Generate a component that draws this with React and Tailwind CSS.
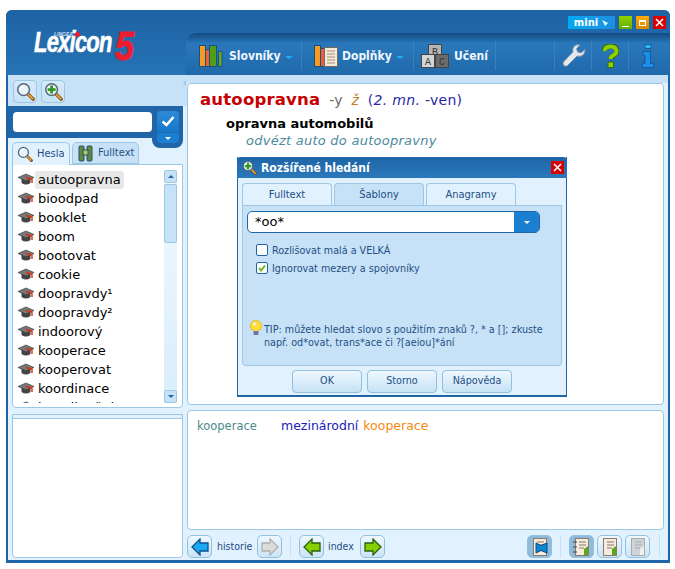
import React from 'react';

const WORDS = [
  'autoopravna', 'bioodpad', 'booklet', 'boom', 'bootovat', 'cookie',
  'doopravdy¹', 'doopravdy²', 'indoorový', 'kooperace', 'kooperovat', 'koordinace', 'koordinační',
];

const UI = "font-['DejaVu_Sans_Condensed','Liberation_Sans',sans-serif]";
const VERDANA = "font-['DejaVu_Sans',sans-serif]";

function Magnifier({ plus, size = 20 }) {
  return (
    <svg width={size} height={size} viewBox="0 0 20 20">
      <path d="M12 12l6 6" stroke="#7a4a10" strokeWidth="3.6" strokeLinecap="round" />
      <path d="M12.5 12.5l5 5" stroke="#f0a030" strokeWidth="2" strokeLinecap="round" />
      <circle cx="8" cy="8" r="6.2" fill="#e9f3fa" stroke="#56687a" strokeWidth="1.6" />
      <path d="M4.5 8a3.5 3.5 0 0 1 3.5-3.5" stroke="#fff" strokeWidth="1.5" fill="none" />
      {plus && <path d="M8 3.8v8.4M3.8 8h8.4" stroke="#2f9a1c" strokeWidth="3" />}
    </svg>
  );
}

function Binoculars() {
  return (
    <svg width="15" height="17" viewBox="0 0 15 17">
      <rect x="1" y="1" width="5" height="15" rx="1" fill="#5f8a3c" stroke="#24506e" />
      <rect x="9" y="1" width="5" height="15" rx="1" fill="#5f8a3c" stroke="#24506e" />
      <rect x="5" y="5" width="5" height="5" fill="#b8c86a" stroke="#24506e" />
    </svg>
  );
}

function Cap() {
  return (
    <svg width="16" height="13" viewBox="0 0 16 13">
      <path d="M3.5 5v5q4.500 3 9 0V5z" fill="#444" />
      <path d="M0 4.500L8 1l8 3.500L8 8z" fill="#777" stroke="#333" strokeWidth="0.6" />
      <path d="M8 4.500l6 1.500v4" stroke="#e03010" strokeWidth="1.400" fill="none" />
    </svg>
  );
}

function Books() {
  return (
    <svg width="24" height="22" viewBox="0 0 24 22">
      <rect x="0.500" y="0.500" width="6" height="21" fill="#f59a23" stroke="#1e4f7f" />
      <rect x="6.500" y="4.500" width="4" height="17" fill="#e8603c" stroke="#1e4f7f" />
      <rect x="10.500" y="0.500" width="7" height="21" fill="#4f9f18" stroke="#1e4f7f" />
      <rect x="19.500" y="6.500" width="3.500" height="15" fill="#5fae20" stroke="#1e4f7f" />
    </svg>
  );
}

function Docs() {
  return (
    <svg width="24" height="22" viewBox="0 0 24 22">
      <rect x="0.500" y="0.500" width="6" height="21" fill="#f59a23" stroke="#1e4f7f" />
      <rect x="6.500" y="3.500" width="4" height="18" fill="#e8603c" stroke="#1e4f7f" />
      <rect x="10.500" y="2.500" width="13" height="19" fill="#f5ead8" stroke="#7a6a5a" />
      <path d="M13 6h8M13 9h8M13 12h8M13 15h8M13 18h8" stroke="#a09080" strokeWidth="1" />
    </svg>
  );
}

function Blocks() {
  const box = (x, y, l, fill) => (
    <g>
      <rect x={x} y={y} width="13" height="13" fill={fill} stroke="#444" />
      <text x={x + 6.500} y={y + 10} fontSize="10" textAnchor="middle" fill="#333" fontFamily="'Liberation Mono',monospace">{l}</text>
    </g>
  );
  return (
    <svg width="29" height="24" viewBox="0 0 29 24">
      {box(7.500, 0.500, 'B', '#b5b5b5')}
      {box(0.500, 10.500, 'A', '#d5d5d5')}
      {box(14.500, 10.500, 'C', '#6c6c6c')}
    </svg>
  );
}

function Wrench() {
  return (
    <svg width="24" height="24" viewBox="0 0 24 24">
      <path d="M23 5.500l-4 3.500-3.500-1-1-3.500L18 1q-4-1-6 1.500-2 2.500-1 5.500L1.500 18q-1 2 .5 3.500t3.500 0L15 12q3.500 1 6-1 2-2 2-5.500z" fill="#e4e8ee" stroke="#8a9aac" strokeWidth="1" />
    </svg>
  );
}

function Question() {
  return (
    <svg width="17" height="24" viewBox="0 0 17 24">
      <path d="M2 7q.5-5 6.500-5t6.500 5q0 3-3.500 4.500-2.500 1-2.500 3.500" fill="none" stroke="#3a6a10" strokeWidth="5.500" />
      <path d="M2.500 7q.5-4.500 6-4.500t6 4.500q0 3-3.500 4.500-2.500 1-2.500 3.500" fill="none" stroke="#8ed000" strokeWidth="3.800" />
      <rect x="6" y="18" width="5.500" height="5.500" fill="#8ed000" stroke="#3a6a10" />
    </svg>
  );
}

function InfoIcon() {
  return (
    <svg width="12" height="24" viewBox="0 0 12 24">
      <rect x="3" y="0.500" width="6" height="4" fill="#2cb8f0" stroke="#1458a0" />
      <path d="M1 7.500h7.500v12H11.500v4H.5v-4H3v-8H1z" fill="#1a90e8" stroke="#1458a0" />
    </svg>
  );
}

function Arrow({ dir, color, edge }) {
  const pts = dir === 'left' ? '1,9 9,1 9,5 17,5 17,13 9,13 9,17' : '17,9 9,1 9,5 1,5 1,13 9,13 9,17';
  return (
    <svg width="18" height="18" viewBox="0 0 18 18">
      <polygon points={pts} fill={color} stroke={edge} strokeWidth="1.300" />
    </svg>
  );
}

function Notebook({ tabs, disabled, pin }) {
  const paper = disabled ? '#d0d4d6' : '#f6ebdc';
  const line = disabled ? '#a8acae' : '#8a7a6a';
  return (
    <svg width="18" height="20" viewBox="0 0 18 20">
      <rect x="2.500" y="1.500" width="13" height="17" fill={paper} stroke={line} />
      <path d="M6 5h7M6 8h7M6 11h5" stroke={line} strokeWidth="1" />
      {tabs && <path d="M0 5h4M0 10h4M0 15h4" stroke="#444" strokeWidth="1" />}
      {!pin && <path d="M11 18v-6l4-3v9z" fill={disabled ? '#f0f0f0' : '#58a818'} />}
      {pin && <path d="M5 6l5 2.500L16 6v10l-6-2.500L5 16z" fill="#0a88d8" stroke="#0a4a80" />}
    </svg>
  );
}

function ToolButton({ active, children, className = '' }) {
  return (
    <div className={`w-[25px] h-[23px] shrink-0 flex items-center justify-center rounded-[5px] border border-[#93c0de] ${active ? 'bg-[#8ebbdc]' : 'bg-gradient-to-b from-[#eef8ff] to-[#cbe4f6]'} ${className}`}>
      {children}
    </div>
  );
}

function NavItem({ icon, label, arrow, sep = true, gap = 'ml-[4px]', className = '' }) {
  return (
    <div className={`h-[29px] flex items-center ${sep ? 'border-r border-[#3b80bd]' : ''} ${className}`}>
      {icon}
      {label && <span className={`${gap} text-[12px] font-bold text-[#eef7ff] ${UI}`}>{label}</span>}
      {arrow && <span className="ml-[4px] mt-[3px] w-0 h-0 border-x-[4px] border-t-[3px] border-x-transparent border-t-[#22aef0]" />}
    </div>
  );
}

function Header() {
  return (
    <div className="h-[65px] flex shrink-0 rounded-t-[6px] bg-gradient-to-b from-[#1e63a3] to-[#2673b5]">
      {/* logo */}
      <div className="w-[180px] shrink-0 relative">
        <div className="pl-[28px] pt-[16px] flex items-start font-['Liberation_Sans',sans-serif] italic font-bold text-white">
          <span className="w-[81px] shrink-0 origin-left scale-x-[0.73] text-[30px] leading-[32px] tracking-[-1px] [-webkit-text-stroke:0.6px_white]">Lexicon</span>
          <span className="w-[20px] shrink-0 origin-left scale-x-[0.85] text-[40px] leading-[40px] text-[#ee1c2e] [-webkit-text-stroke:1px_#ee1c2e]">5</span>
        </div>
        <span className="absolute left-[48px] top-[21px] text-[5px] leading-[6px] italic font-bold text-[#cfe0f0] font-['Liberation_Sans',sans-serif]">LINGEA</span>
        <span className="absolute left-[69px] top-[22px] w-[5px] h-[5px] rounded-full bg-[#ee1c2e]" />
      </div>
      <div className="flex-1 flex flex-col">
        {/* window controls */}
        <div className="h-[23px] pt-[6px] pr-[4px] flex justify-end gap-[4px]">
          <div className="w-[47px] h-[13px] bg-gradient-to-r from-[#00a8f4] to-[#1c8fe0] flex items-center justify-center gap-[3px] text-white text-[10px] font-bold leading-none font-['DejaVu_Sans',sans-serif]">
            mini
            <svg width="8" height="8" viewBox="0 0 8 8"><path d="M1 1l6 3-3 3z" fill="#dff" /></svg>
          </div>
          <div className="w-[13px] h-[13px] bg-gradient-to-b from-[#8fd400] to-[#66ad00] flex items-end justify-center pb-[2px]"><span className="w-[7px] h-[1px] bg-white" /></div>
          <div className="w-[13px] h-[13px] bg-gradient-to-b from-[#ffa800] to-[#d98a00] flex items-center justify-center"><span className="w-[7px] h-[6px] border border-white border-t-2" /></div>
          <div className="w-[13px] h-[13px] bg-[#d80000] flex items-center justify-center">
            <svg width="9" height="9" viewBox="0 0 9 9"><path d="M1 1l7 7M8 1L1 8" stroke="#fff" strokeWidth="1.600" /></svg>
          </div>
        </div>
        {/* tab bar */}
        <div className="flex-1 rounded-tl-[10px] bg-gradient-to-b from-[#124a82] via-[#2a78bb] via-[25%] to-[#1f69aa] pt-[8px] flex items-start">
          <NavItem className="w-[116px] pl-[13px]" icon={<Books />} label="Slovníky" gap="ml-[6px]" arrow />
          <NavItem className="w-[112px] pl-[12px]" icon={<Docs />} label="Doplňky" arrow />
          <NavItem className="w-[82px] pl-[7px]" icon={<Blocks />} label="Učení" />
          <NavItem className="w-[59px]" />
          <NavItem className="w-[37px] pl-[7px]" icon={<Wrench />} />
          <NavItem className="w-[37px] pl-[10px]" icon={<Question />} />
          <NavItem className="pl-[13px]" sep={false} icon={<InfoIcon />} />
        </div>
      </div>
    </div>
  );
}

function Scrollbar() {
  return (
    <div className="w-[13px] h-[233px] shrink-0 flex flex-col bg-gradient-to-b from-[#f2f9ff] to-[#d9edfb]">
      <div className="h-[13px] bg-[#c7e2f6] border border-[#9cc8e6] rounded-[2px] flex items-center justify-center">
        <span className="w-0 h-0 border-x-[3px] border-b-[3px] border-x-transparent border-b-[#1f65a7]" />
      </div>
      <div className="h-[59px] mt-[1px] bg-[#c7e2f6] border border-[#9cc8e6] rounded-[2px]" />
      <div className="flex-1" />
      <div className="h-[13px] bg-[#c7e2f6] border border-[#9cc8e6] rounded-[2px] flex items-center justify-center">
        <span className="w-0 h-0 border-x-[3px] border-t-[3px] border-x-transparent border-t-[#1f65a7]" />
      </div>
    </div>
  );
}

function LeftColumn() {
  return (
    <div className="w-[179px] shrink-0 flex flex-col relative">
      <div className="h-[31px] bg-[#c7e2f6] pl-[5px] pt-[5px] pr-[4px] flex gap-[4px]">
        <div className="w-[24px] h-[23px] rounded-[4px] border border-[#9cc8e6] bg-gradient-to-b from-[#d6ebfa] to-[#c7e2f6] flex items-center justify-center"><Magnifier size={19} /></div>
        <div className="w-[24px] h-[23px] rounded-[4px] border border-[#9cc8e6] bg-gradient-to-b from-[#d6ebfa] to-[#c7e2f6] flex items-center justify-center"><Magnifier plus size={19} /></div>
      </div>
      <div className="h-[32px] mr-[4px] bg-[#1f65a7] pl-[5px] pt-[6px]">
        <div className="w-[139px] h-[20px] rounded-[4px] bg-white" />
      </div>
      {/* search button hangs below the band */}
      <div className="absolute left-[144px] top-[31px] w-[31px] h-[42px] bg-[#1f65a7] rounded-b-[8px] pt-[5px] pl-[5px]">
        <div className="w-[22px] h-[21px] rounded-t-[4px] bg-gradient-to-b from-[#2d8ad6] to-[#1677c8] flex items-center justify-center">
          <svg width="14" height="11" viewBox="0 0 14 11"><path d="M1.500 5.500l4 3.500 7-8" stroke="#fff" strokeWidth="2.600" fill="none" /></svg>
        </div>
        <div className="w-[22px] h-[10px] mt-[1px] rounded-b-[4px] bg-[#1a7fd0] flex items-center justify-center">
          <span className="w-0 h-0 border-x-[3px] border-t-[3px] border-x-transparent border-t-white" />
        </div>
      </div>

      <div className="flex-1 bg-[#e1f1fd] pl-[4px] pr-[4px] pt-[4px] flex flex-col">
        {/* tabs */}
        <div className={`flex gap-[2px] h-[23px] text-[11px] text-[#1f4f86] relative z-10 ${UI}`}>
          <div className="w-[58px] h-[23px] bg-[#e1f1fd] border border-b-0 border-[#9cc8e6] rounded-t-[5px] flex items-center pl-[4px] gap-[4px]"><Magnifier size={16} />Hesla</div>
          <div className="w-[67px] h-[22px] bg-[#c7e2f6] border border-[#9cc8e6] rounded-t-[5px] flex items-center pl-[5px] gap-[5px]"><Binoculars />Fulltext</div>
        </div>
        {/* word list */}
        <div className="h-[244px] shrink-0 -mt-[1px] bg-white border border-[#9cc8e6] rounded-b-[4px] flex pl-[5px] pr-[5px] pt-[5px] overflow-hidden">
          <div className={`flex-1 h-[233px] overflow-hidden text-[13px] text-black ${VERDANA}`}>
            {WORDS.map((w, i) => (
              <div key={w} className="h-[19px] flex items-center">
                <Cap />
                <span className={`ml-[1px] pl-[3px] pr-[3px] h-[18px] flex items-center rounded-[3px] ${i === 0 ? 'bg-[#e8e8e8]' : ''}`}>{w}</span>
              </div>
            ))}
          </div>
          <Scrollbar />
        </div>
        <div className="h-[144px] shrink-0 mt-[6px] bg-white border border-[#9cc8e6] rounded-b-[4px]">
          <div className="h-[4px] bg-[#e1f1fd] border-b border-[#9cc8e6]" />
        </div>
      </div>
    </div>
  );
}

function Dialog() {
  const tab = 'h-[22px] w-[90px] pt-[1px] text-[11px] border border-b-0 border-[#9cc8e6] rounded-t-[4px] flex items-center justify-center';
  const btn = 'w-[70px] h-[23px] rounded-[4px] border border-[#93c0de] bg-gradient-to-b from-[#eef8ff] to-[#c7e2f6] flex items-center justify-center';
  return (
    <div className={`absolute left-[50px] top-[82px] w-[330px] h-[240px] border border-t-0 border-b-2 border-[#1f65a7] bg-[#e1f1fd] text-[10.700px] text-[#1f4f86] flex flex-col ${UI}`}>
      <div className="h-[21px] -mx-[1px] rounded-t-[4px] bg-gradient-to-b from-[#1f65a7] to-[#2a78bb] flex items-center pl-[5px] pr-[3px] text-white font-bold text-[12px]">
        <Magnifier plus size={15} />
        <span className="ml-[4px] flex-1">Rozšířené hledání</span>
        <div className="w-[13px] h-[13px] bg-[#d80000] flex items-center justify-center">
          <svg width="9" height="9" viewBox="0 0 9 9"><path d="M1 1l7 7M8 1L1 8" stroke="#fff" strokeWidth="1.600" /></svg>
        </div>
      </div>
      <div className="flex gap-[2px] pl-[4px] pt-[5px] h-[27px] shrink-0">
        <div className={`${tab} bg-[#e1f1fd]`}>Fulltext</div>
        <div className={`${tab} bg-[#c7e2f6]`}>Šablony</div>
        <div className={`${tab} bg-[#e1f1fd]`}>Anagramy</div>
      </div>
      <div className="mx-[4px] h-[161px] shrink-0 bg-[#c7e2f6] border border-[#9cc8e6] rounded-b-[4px] pl-[4px] pt-[5px] flex flex-col">
        <div className="w-[293px] h-[22px] shrink-0 bg-white border border-[#1f65a7] rounded-[5px] flex items-center overflow-hidden">
          <span className={`flex-1 pl-[7px] text-[13px] text-black ${VERDANA}`}>*oo*</span>
          <div className="w-[25px] h-full bg-[#1a7fd0] flex items-center justify-center">
            <span className="w-0 h-0 border-x-[3px] border-t-[3px] border-x-transparent border-t-white" />
          </div>
        </div>
        <label className="mt-[10px] ml-[9px] h-[14px] flex items-center gap-[4px]">
          <span className="w-[12px] h-[12px] bg-white border border-[#1f65a7] rounded-[2px]" />
          <span className="pt-[2px]">Rozlišovat malá a VELKÁ</span>
        </label>
        <label className="mt-[4px] ml-[9px] h-[14px] flex items-center gap-[4px]">
          <span className="w-[12px] h-[12px] bg-white border border-[#1f65a7] rounded-[2px] flex items-center justify-center">
            <svg width="8" height="8" viewBox="0 0 8 8"><path d="M1 4l2 2.500L7 1.500" stroke="#6ab010" strokeWidth="1.800" fill="none" /></svg>
          </span>
          <span className="pt-[2px]">Ignorovat mezery a spojovníky</span>
        </label>
        <div className="mt-[48px] ml-[3px] flex items-start gap-[2px] leading-[13px]">
          <svg className="mt-[-3px] shrink-0" width="12" height="16" viewBox="0 0 12 16">
            <circle cx="6" cy="6" r="5.500" fill="#ffdc3c" stroke="#e8b820" />
            <circle cx="4.500" cy="4" r="1.800" fill="#fff7c0" />
            <rect x="3.500" y="11" width="5" height="4" rx="1" fill="#7078a8" />
          </svg>
          <span className="w-[285px]">TIP: můžete hledat slovo s použitím znaků ?, * a []; zkuste např. od*ovat, trans*ace či ?[aeiou]*ání</span>
        </div>
      </div>
      <div className="mt-[4px] flex justify-center gap-[5px]">
        <div className={btn}>OK</div>
        <div className={btn}>Storno</div>
        <div className={btn}>Nápověda</div>
      </div>
    </div>
  );
}

function RightColumn() {
  return (
    <div className="flex-1 flex flex-col relative">
      {/* splitter triangle */}
      <span className="absolute -left-[4px] top-[5px] w-0 h-0 border-y-[3px] border-r-[3px] border-y-transparent border-r-[#9cc8e6]" />
      <div className="h-[8px] shrink-0 bg-[#c7e2f6]" />
      <div className="flex-1 bg-[#e1f1fd] pr-[4px] flex flex-col">
        <div className={`h-[322px] shrink-0 bg-white border border-[#9cc8e6] rounded-[4px] pl-[12px] pt-[4px] ${VERDANA}`}>
          <div className="flex items-baseline text-[13px] h-[22px]">
            <span className="text-[16.500px] font-bold text-[#c60000] tracking-[0.2px]">autoopravna</span>
            <span className="ml-[9px] text-[14px] text-[#666]">-y</span>
            <span className="ml-[9px] text-[14px] italic text-[#c8781e]">ž</span>
            <span className="ml-[9px] text-[14px] tracking-[0.3px] text-[#2a2aa8]">(<i>2. mn.</i> -ven)</span>
          </div>
          <div className="mt-[6px] ml-[26px] text-[13px] leading-[16px] font-bold text-black">opravna automobilů</div>
          <div className="mt-[1px] ml-[46px] text-[13px] leading-[16px] italic tracking-[0.25px] text-[#4b8a9c]">odvézt auto do autoopravny</div>
        </div>
        <div className={`h-[120px] shrink-0 mt-[5px] bg-white border border-[#9cc8e6] rounded-[4px] pl-[9px] pt-[6px] flex items-baseline ${VERDANA}`}>
          <span className="w-[84px] text-[11.500px] text-[#4b8a8c]">kooperace</span>
          <span className="text-[12.500px] text-[#1a1ab8]">mezinárodní</span>
          <span className="ml-[5px] text-[12.500px] text-[#f58a0c]">kooperace</span>
        </div>
        {/* bottom toolbar */}
        <div className={`mt-[5px] h-[23px] shrink-0 flex items-center text-[10.500px] text-[#1f4f86] ${UI}`}>
          <ToolButton><Arrow dir="left" color="#1aa8f0" edge="#10508f" /></ToolButton>
          <span className="w-[45px] pl-[5px]">historie</span>
          <ToolButton><Arrow dir="right" color="#dcdcdc" edge="#b0b0b0" /></ToolButton>
          <span className="ml-[8px] w-px h-[23px] bg-[#c7e2f6]" />
          <ToolButton className="ml-[8px]"><Arrow dir="left" color="#86d000" edge="#2a6010" /></ToolButton>
          <span className="w-[36px] pl-[4px]">index</span>
          <ToolButton><Arrow dir="right" color="#86d000" edge="#2a6010" /></ToolButton>
          <ToolButton active className="ml-[142px]"><Notebook pin /></ToolButton>
          <span className="ml-[8px] w-px h-[23px] bg-[#c7e2f6]" />
          <ToolButton active className="ml-[8px]"><Notebook tabs /></ToolButton>
          <ToolButton className="ml-[3px]"><Notebook /></ToolButton>
          <ToolButton className="ml-[3px]"><Notebook disabled /></ToolButton>
          <span className="ml-[9px] w-px h-[23px] bg-[#c7e2f6]" />
        </div>
      </div>
      <Dialog />
    </div>
  );
}

export default function App() {
  return (
    <div className="w-[675px] h-[569px] bg-white pl-[6px] pt-[10px]">
      <div className="w-[664px] h-[553px] flex flex-col rounded-t-[6px] border-x-2 border-b-[3px] border-[#1f65a7] border-t-0 bg-[#e1f1fd]">
        <div className="-mx-[2px] shrink-0"><Header /></div>
        <div className="flex-1 flex min-h-0">
          <LeftColumn />
          <RightColumn />
        </div>
      </div>
    </div>
  );
}
